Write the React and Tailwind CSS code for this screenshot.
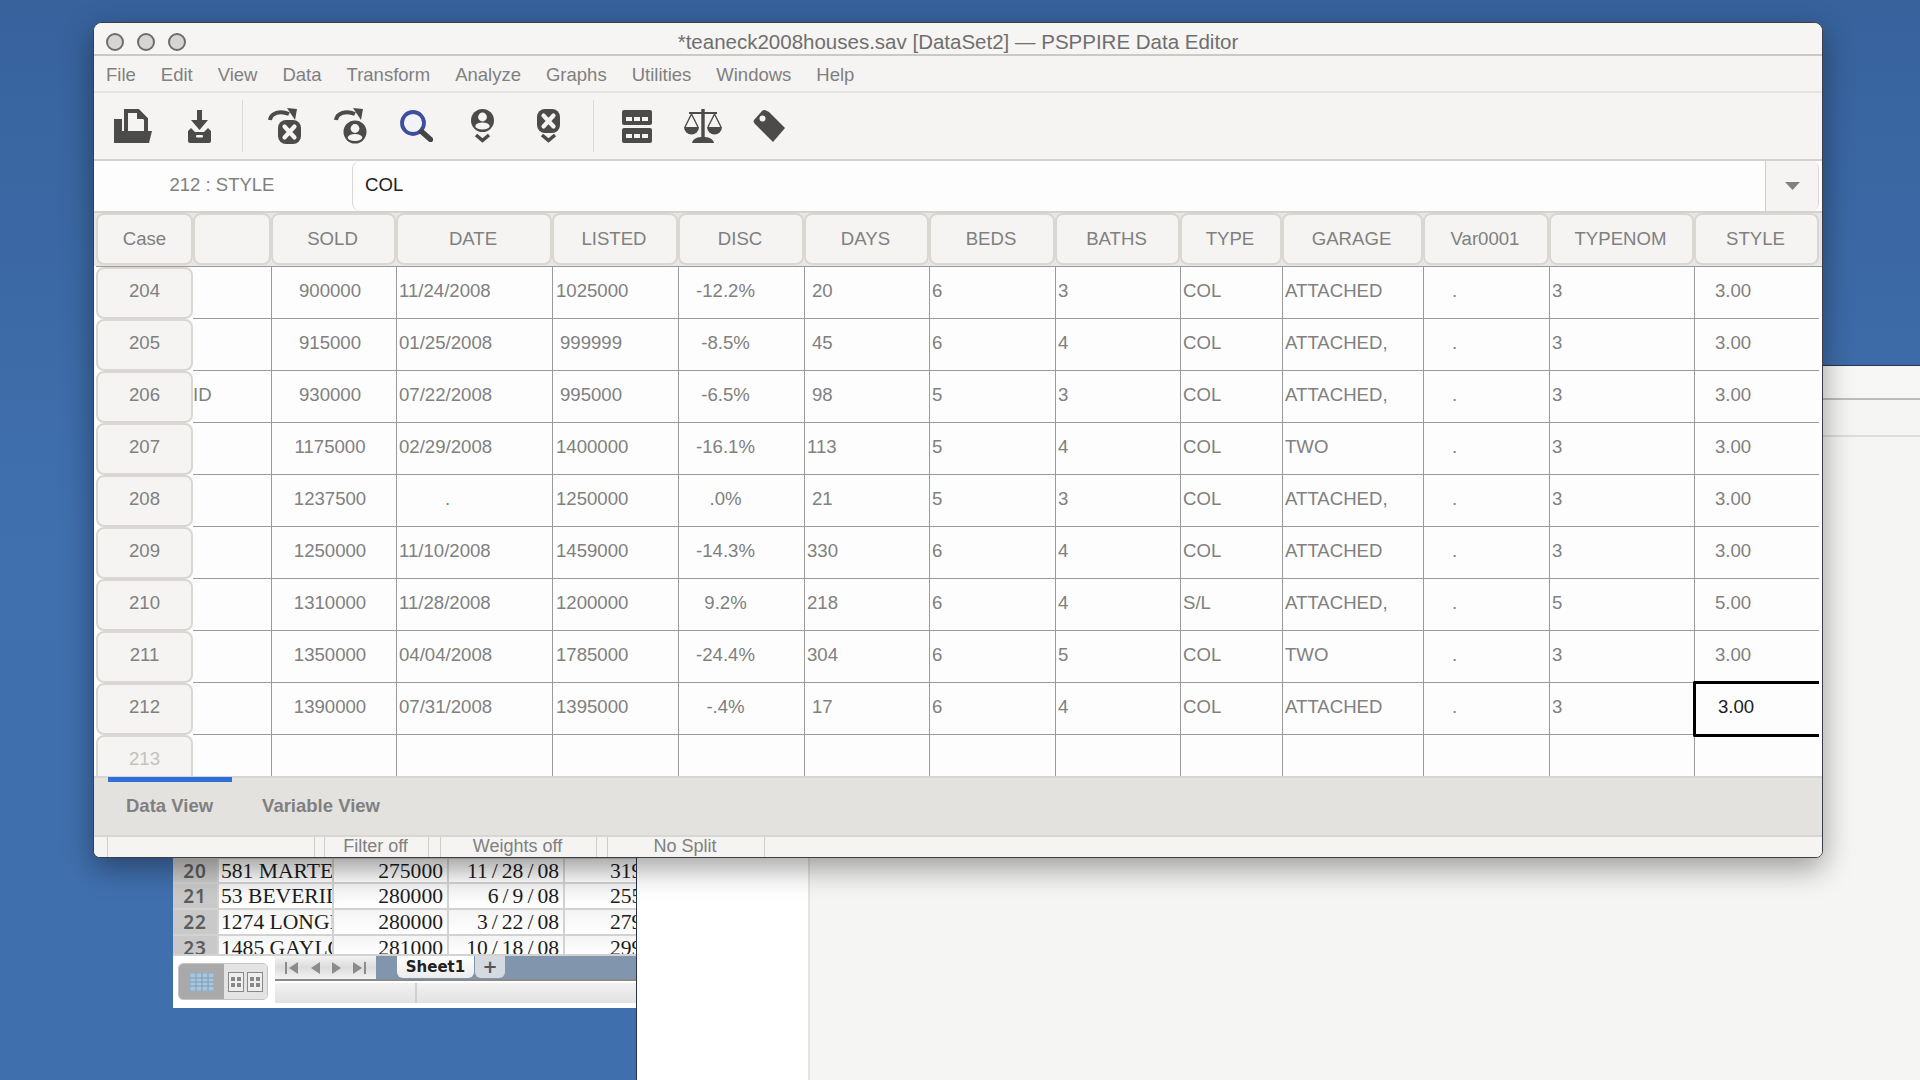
import React from "react";

const INK = "#4b4b49";
const Chevron = () => <polyline points="5,26 11.5,31.5 18,26" fill="none" stroke={INK} strokeWidth="3.6" />;
const Arc = () => (
  <>
    <path d="M2 12 C3 5 12 2 21 6" fill="none" stroke={INK} strokeWidth="4" />
    <polygon points="19,0 29,1 27,12" fill={INK} />
  </>
);
const Person = ({ cx, cy }) => (
  <>
    <circle cx={cx} cy={cy} r="11.5" fill={INK} />
    <circle cx={cx} cy={cy - 3.5} r="4.4" fill="#f5f4f2" />
    <ellipse cx={cx} cy={cy + 5.5} rx="7.2" ry="3.6" fill="#f5f4f2" />
  </>
);
const Cross = ({ x, y }) => (
  <>
    <rect x={x} y={y} width="23" height="24" rx="8" fill={INK} />
    <path d={`M${x + 6.5} ${y + 6.5} L${x + 16.5} ${y + 17.5} M${x + 16.5} ${y + 6.5} L${x + 6.5} ${y + 17.5}`} stroke="#f5f4f2" strokeWidth="4.2" strokeLinecap="round" />
  </>
);

const icons = {
  open: (
    <svg width="38" height="34" viewBox="0 0 38 34">
      <path d="M12 22 V2 H24 L32 10 V22" fill="none" stroke={INK} strokeWidth="4" />
      <polygon points="23,0 33,10 23,10" fill={INK} />
      <rect x="0" y="10" width="8" height="24" fill={INK} />
      <polygon points="8,22 38,22 35,34 3,34" fill={INK} />
    </svg>
  ),
  save: (
    <svg width="23" height="33" viewBox="0 0 23 33">
      <rect x="9" y="0" width="5" height="11" fill={INK} />
      <polygon points="3,10 20,10 11.5,20" fill={INK} />
      <path d="M0 21 L3 18 L7 22 H16 L20 18 L23 21 V31 Q23 33 21 33 H2 Q0 33 0 31 Z" fill={INK} />
      <rect x="8" y="25" width="7" height="2.4" rx="1" fill="#f5f4f2" />
    </svg>
  ),
  gotoX: (
    <svg width="33" height="36" viewBox="0 0 33 36">
      <Arc />
      <Cross x={10} y={12} />
    </svg>
  ),
  gotoP: (
    <svg width="33" height="36" viewBox="0 0 33 36">
      <Arc />
      <Person cx={21} cy={24} />
    </svg>
  ),
  find: (
    <svg width="33" height="32" viewBox="0 0 33 32">
      <circle cx="13" cy="13" r="11" fill="#f1f3f8" stroke="#3d4f9c" strokeWidth="3.8" />
      <path d="M21.5 21.5 L30.5 29.5" stroke="#454545" strokeWidth="5.4" strokeLinecap="round" />
    </svg>
  ),
  personDown: (
    <svg width="23" height="34" viewBox="0 0 23 34">
      <Person cx={11.5} cy={11.5} />
      <Chevron />
    </svg>
  ),
  crossDown: (
    <svg width="23" height="34" viewBox="0 0 23 34">
      <Cross x={0} y={0} />
      <Chevron />
    </svg>
  ),
  table: (
    <svg width="30" height="33" viewBox="0 0 30 33" fill={INK}>
      <rect width="30" height="15" rx="2" />
      <rect y="18" width="30" height="15" rx="2" />
      <g fill="#f5f4f2">
        <rect x="4" y="7" width="6" height="4" />
        <rect x="12" y="7" width="6" height="4" />
        <rect x="20" y="7" width="6" height="4" />
        <rect x="4" y="24" width="6" height="4" />
        <rect x="12" y="24" width="6" height="4" />
        <rect x="20" y="24" width="6" height="4" />
      </g>
    </svg>
  ),
  scale: (
    <svg width="38" height="34" viewBox="0 0 38 34" fill={INK}>
      <rect x="17.3" y="0" width="3.4" height="30" />
      <rect x="5" y="3" width="28" height="2" />
      <path d="M7.5 5 L1 18 M7.5 5 L14 18 M30.5 5 L24 18 M30.5 5 L37 18" stroke={INK} strokeWidth="1.4" fill="none" />
      <path d="M0 18 H15 A7.5 7.5 0 0 1 0 18 Z" />
      <path d="M23 18 H38 A7.5 7.5 0 0 1 23 18 Z" />
      <path d="M8 34 C9 29 14 28 19 28 C24 28 29 29 30 34 Z" />
    </svg>
  ),
  tag: (
    <svg width="32" height="32" viewBox="0 0 32 32">
      <path d="M1 10 L9 1 Q10 0 12 0 L16 2 L32 18 L20 32 L2 14 Q0 12 1 10 Z" fill={INK} />
      <circle cx="9.5" cy="8.5" r="3" fill="#f5f4f2" />
    </svg>
  ),
};

const Slot = ({ name }) => <div className="flex w-[66px] items-center justify-center">{icons[name]}</div>;
const Sep = ({ cls }) => <div className={`h-[52px] w-px self-center bg-[#dcdad7] ${cls}`} />;

const widths = ["w-[125px]", "w-[156px]", "w-[126px]", "w-[126px]", "w-[125px]", "w-[126px]", "w-[125px]", "w-[102px]", "w-[141px]", "w-[126px]", "w-[145px]", "w-[125px]"];
const headers = ["SOLD", "DATE", "LISTED", "DISC", "DAYS", "BEDS", "BATHS", "TYPE", "GARAGE", "Var0001", "TYPENOM", "STYLE"];

const rows = [
  ["204", "", "900000", "11/24/2008", "1025000", "-12.2%", "20", "6", "3", "COL", "ATTACHED", ".", "3", "3.00"],
  ["205", "", "915000", "01/25/2008", "999999", "-8.5%", "45", "6", "4", "COL", "ATTACHED,", ".", "3", "3.00"],
  ["206", "ID", "930000", "07/22/2008", "995000", "-6.5%", "98", "5", "3", "COL", "ATTACHED,", ".", "3", "3.00"],
  ["207", "", "1175000", "02/29/2008", "1400000", "-16.1%", "113", "5", "4", "COL", "TWO", ".", "3", "3.00"],
  ["208", "", "1237500", ".", "1250000", ".0%", "21", "5", "3", "COL", "ATTACHED,", ".", "3", "3.00"],
  ["209", "", "1250000", "11/10/2008", "1459000", "-14.3%", "330", "6", "4", "COL", "ATTACHED", ".", "3", "3.00"],
  ["210", "", "1310000", "11/28/2008", "1200000", "9.2%", "218", "6", "4", "S/L", "ATTACHED,", ".", "5", "5.00"],
  ["211", "", "1350000", "04/04/2008", "1785000", "-24.4%", "304", "6", "5", "COL", "TWO", ".", "3", "3.00"],
  ["212", "", "1390000", "07/31/2008", "1395000", "-.4%", "17", "6", "4", "COL", "ATTACHED", ".", "3", "3.00"],
];

// alignment of the text inside each data column
const cellAlign = (col, v) => {
  switch (col) {
    case 0: return "justify-center pr-2";
    case 1: return v === "." ? "pl-[48px]" : "pl-[2px]";
    case 2: return v.length === 6 ? "pl-[7px]" : "pl-[3px]";
    case 3: return "justify-center pr-8";
    case 4: return v.length === 2 ? "pl-[7px]" : "pl-[2px]";
    case 5:
    case 6: return "pl-[2px]";
    case 7:
    case 8: return "pl-[2px]";
    case 9: return "pl-[28px]";
    case 10: return "pl-[2px]";
    default: return "pl-[20px]";
  }
};

const SheetDate = ({ value }) => {
  const parts = value.split("/");
  return (
    <>
      {parts[0]}
      <span className="mx-[4px]">/</span>
      {parts[1]}
      <span className="mx-[4px]">/</span>
      {parts[2]}
    </>
  );
};

const Excel = () => {
  const lines = [
    ["20", "581 MARTENSE", "275000", "11/28/08", "319000", "h-[25px]"],
    ["21", "53 BEVERIDGE", "280000", "6/9/08", "255000", "h-[26px]"],
    ["22", "1274 LONGFELLOW", "280000", "3/22/08", "279000", "h-[26px]"],
    ["23", "1485 GAYLORD", "281000", "10/18/08", "299000", "h-[20px]"],
  ];
  return (
    <div className="absolute left-[173px] top-[858px] flex h-[150px] w-[463px] flex-col overflow-hidden bg-white font-['Liberation_Serif',serif] text-[21.6px] leading-[25px] text-[#1c1c1c]">
      <div className="h-px bg-[#cfcfcf]" />
      {lines.map(([n, a, b, c, d, h]) => (
        <div key={n} className={`flex shrink-0 overflow-hidden border-b-2 border-[#d2d2d2] bg-gradient-to-b from-[#f4f4f4] to-white ${h}`}>
          <div className="w-[44px] shrink-0 bg-[#c9c9c9] text-center font-['Noto_Sans',sans-serif] text-[19px] font-semibold tracking-[1px] text-[#5c5c5c]">{n}</div>
          <div className="w-[115px] shrink-0 overflow-hidden whitespace-nowrap border-l-2 border-[#d2d2d2] pl-[2px]">{a}</div>
          <div className="w-[115px] shrink-0 border-l-2 border-[#d2d2d2] pr-1 text-right">{b}</div>
          <div className="w-[116px] shrink-0 whitespace-nowrap border-l-2 border-[#d2d2d2] pr-1 text-right"><SheetDate value={c} /></div>
          <div className="w-[73px] shrink-0 overflow-hidden whitespace-nowrap border-l-2 border-[#d2d2d2] pl-[45px]">{d}</div>
        </div>
      ))}
      <div className="flex flex-1">
        <div className="flex w-[102px] shrink-0 items-start bg-white pl-[5px] pt-[7px]">
          <div className="flex h-[37px] w-[90px] overflow-hidden rounded-[5px] border border-[#c4c4c4]">
            <div className="flex w-[45px] items-center justify-center bg-[#a9a9a9]">
              <svg width="24" height="18" viewBox="0 0 24 18">
                <rect width="24" height="18" fill="#a9c6dc" stroke="#7fb0d2" />
                <path d="M0 5H24M0 9H24M0 13H24M6 0V18M12 0V18M18 0V18" stroke="#7d9db6" strokeWidth="1" />
              </svg>
            </div>
            <div className="flex flex-1 items-center justify-center gap-[3px] bg-[#e3e3e3]">
              {[0, 1].map((i) => (
                <svg key={i} width="16" height="20" viewBox="0 0 16 20">
                  <rect x="0.5" y="0.5" width="15" height="19" fill="#eee" stroke="#888" />
                  <path d="M3 5h4v4H3zM9 5h4v4H9zM3 11h4v4H3zM9 11h4v4H9z" fill="#888" />
                </svg>
              ))}
            </div>
          </div>
        </div>
        <div className="flex min-w-0 flex-1 flex-col">
          <div className="flex h-[25px] shrink-0 border-b-2 border-[#8a8a8a] bg-[#8196ad]">
            <div className="flex w-[101px] items-center justify-center gap-[12px] bg-gradient-to-b from-[#f3f3f3] via-[#dcdcdc] to-[#f3f3f3]">
              <svg width="14" height="12" viewBox="0 0 14 12" fill="#8b8b8b"><rect width="2" height="12" /><polygon points="13,0 13,12 4,6" /></svg>
              <svg width="9" height="12" viewBox="0 0 9 12" fill="#8b8b8b"><polygon points="9,0 9,12 0,6" /></svg>
              <svg width="9" height="12" viewBox="0 0 9 12" fill="#8b8b8b"><polygon points="0,0 0,12 9,6" /></svg>
              <svg width="14" height="12" viewBox="0 0 14 12" fill="#8b8b8b"><polygon points="0,0 0,12 9,6" /><rect x="11" width="2" height="12" /></svg>
            </div>
            <div className="ml-[21px] flex h-[22px] w-[77px] items-center justify-center rounded-b-[6px] bg-gradient-to-b from-white to-[#ececec] font-['DejaVu_Sans',sans-serif] text-[15px] font-bold leading-none text-[#222]">Sheet1</div>
            <div className="ml-px flex h-[22px] w-[30px] items-center justify-center rounded-b-[6px] bg-[#d5dae0] font-['DejaVu_Sans',sans-serif] text-[18px] font-bold leading-none text-[#555]">+</div>
          </div>
          <div className="flex flex-1 bg-white pt-[2px]">
            <div className="h-[20px] w-[142px] border-r-2 border-[#d0d0d0] bg-gradient-to-b from-[#f2f2f2] to-[#e2e2e2]" />
            <div className="h-[20px] flex-1 bg-gradient-to-b from-[#f2f2f2] to-[#e2e2e2]" />
          </div>
        </div>
      </div>
    </div>
  );
};

export default function App() {
  return (
    <div className="relative h-[1080px] w-[1920px] overflow-hidden bg-gradient-to-b from-[#37629c] via-[#4070ae] to-[#406fad] font-['Liberation_Sans',Arial,sans-serif]">
      {/* window behind, on the right */}
      <div className="absolute left-[636px] top-[365px] flex h-[715px] w-[1284px] flex-col border-l border-t border-[#26344d] bg-[#f5f5f4]">
        <div className="ml-auto h-[34px] w-[98px] border-b-2 border-[#bdbdbd] bg-[#f7f7f6]" />
        <div className="ml-auto h-[37px] w-[98px] border-b-2 border-[#dddddc]" />
        <div className="flex-1" />
        <div className="absolute bottom-0 left-0 h-[222px] w-[173px] border-r-2 border-[#e3e3e2] bg-white" />
      </div>

      <Excel />

      {/* main window */}
      <div className="absolute left-[93px] top-[22px] flex h-[836px] w-[1730px] flex-col overflow-hidden rounded-t-[9px] rounded-b-[7px] border border-[#3b3f45] bg-[#f5f4f2] text-[18.6px] text-[#808080] shadow-[0_10px_30px_rgba(0,0,0,0.38)]">
        <div className="grid h-[33px] shrink-0 grid-cols-[1fr_auto_1fr] items-center border-b-2 border-[#cbc9c5] bg-[#f6f5f3] pt-1">
          <div className="flex gap-[13px] pl-[12px]">
            <span className="h-[18px] w-[18px] rounded-full border-2 border-[#6d6d6d] bg-[#d5d5d5]" />
            <span className="h-[18px] w-[18px] rounded-full border-2 border-[#6d6d6d] bg-[#d5d5d5]" />
            <span className="h-[18px] w-[18px] rounded-full border-2 border-[#6d6d6d] bg-[#d5d5d5]" />
          </div>
          <div className="whitespace-nowrap text-[20.5px] text-[#6f6f6f]">*teaneck2008houses.sav [DataSet2] — PSPPIRE Data Editor</div>
          <div />
        </div>
        <div className="flex h-[37px] shrink-0 items-center gap-[25px] border-b-2 border-[#e6e4e1] pl-[12px] pt-[3px] text-[18.5px]">
          {["File", "Edit", "View", "Data", "Transform", "Analyze", "Graphs", "Utilities", "Windows", "Help"].map((m) => (
            <span key={m}>{m}</span>
          ))}
        </div>
        <div className="flex h-[66px] shrink-0 items-center pl-[6px]">
          <Slot name="open" />
          <Slot name="save" />
          <Sep cls="ml-[10px] mr-[8px]" />
          <Slot name="gotoX" />
          <Slot name="gotoP" />
          <Slot name="find" />
          <Slot name="personDown" />
          <Slot name="crossDown" />
          <Sep cls="ml-[12px] mr-[10px]" />
          <Slot name="table" />
          <Slot name="scale" />
          <Slot name="tag" />
        </div>
        <div className="flex h-[54px] shrink-0 border-y-2 border-[#d6d1ce] bg-[#fdfdfd]">
          <div className="flex w-[258px] shrink-0 items-center justify-center pb-[3px] pl-[3px] pr-[5px] text-[18.5px]">212 : STYLE</div>
          <div className="mr-[3px] flex flex-1 overflow-hidden rounded-l-[8px] rounded-r-[8px] border-l border-r border-[#d9d6d3]">
            <div className="flex flex-1 items-center pb-[2px] pl-[12px] text-[#222]">COL</div>
            <div className="flex w-[53px] items-center justify-center border-l border-[#cfcdca] bg-[#f5f4f2]">
              <svg width="15" height="8" viewBox="0 0 15 8"><polygon points="0,0 15,0 7.5,8" fill="#808080" /></svg>
            </div>
          </div>
        </div>
        <div className="flex h-[53px] shrink-0 bg-[#e9e6e3] pl-[2px]">
          <div className="h-[52px] w-[97px] shrink-0 rounded-[8px] border-2 border-[#dad7d3] bg-[#f5f4f2] text-center leading-[48px]">Case</div>
          <div className="h-[52px] w-[78px] shrink-0 rounded-[8px] border-2 border-[#dad7d3] bg-[#f5f4f2]" />
          {headers.map((h, i) => (
            <div key={h} className={`h-[52px] shrink-0 rounded-[8px] border-2 border-[#dad7d3] bg-[#f5f4f2] pr-[2px] text-center leading-[48px] ${widths[i]}`}>{h}</div>
          ))}
        </div>
        <div className="flex min-h-0 flex-1 flex-col bg-[#fdfdfd] pl-[2px]">
          {rows.map((r, ri) => (
            <div key={r[0]} className={`flex shrink-0 ${ri === 0 ? "h-[53px] border-t border-[#9a9a9a]" : "h-[52px]"}`}>
              <div className="flex w-[97px] shrink-0 items-center justify-center rounded-[8px] border-2 border-[#dad7d3] bg-[#f5f4f2] pb-1">{r[0]}</div>
              <div className="flex w-[78px] shrink-0 items-center border-b border-[#9a9a9a] pb-1">{r[1]}</div>
              {r.slice(2).map((v, ci) => {
                const sel = ri === 8 && ci === 11;
                return (
                  <div key={ci} className={`relative flex shrink-0 items-center whitespace-nowrap border-b border-l border-[#9a9a9a] pb-1 ${widths[ci]} ${sel ? "pl-[23px] text-[#1c1c1c]" : cellAlign(ci, v)}`}>
                    {v}
                    {sel && <span className="absolute -bottom-[3px] -left-[2px] -top-[2px] right-0 rounded-l-[2px] border-y-[3px] border-l-[3px] border-black" />}
                  </div>
                );
              })}
            </div>
          ))}
          <div className="flex h-[41px] shrink-0 overflow-hidden">
            <div className="flex h-[52px] w-[97px] shrink-0 justify-center rounded-[8px] border-2 border-[#dad7d3] bg-[#f5f4f2] pt-[8px] text-[#c4c1bd]">213</div>
            <div className="w-[78px] shrink-0" />
            {widths.map((w, i) => (
              <div key={i} className={`shrink-0 border-l border-[#9a9a9a] ${w}`} />
            ))}
          </div>
        </div>
        <div className="relative flex h-[59px] shrink-0 items-center gap-[49px] border-t-2 border-[#d9d5d2] bg-[#e4e2df] pb-[2px] pl-[32px] text-[18.5px] font-bold">
          <span className="absolute left-[14px] top-[-1px] h-[5px] w-[124px] bg-[#2f6fd8]" />
          <span>Data View</span>
          <span>Variable View</span>
        </div>
        <div className="flex h-[22px] shrink-0 items-stretch border-t-2 border-[#d9d7d4] bg-[#f5f4f2] pl-[13px] text-[18px] leading-[19px]">
          <div className="w-[208px] border-x border-[#cfcdca]" />
          <div className="ml-[9px] w-[105px] border-x border-[#cfcdca] pr-[2px] text-center">Filter off</div>
          <div className="ml-[11px] w-[157px] border-x border-[#cfcdca] pr-[2px] text-center">Weights off</div>
          <div className="ml-[10px] w-[158px] border-x border-[#cfcdca] pr-[2px] text-center">No Split</div>
        </div>
      </div>
    </div>
  );
}
